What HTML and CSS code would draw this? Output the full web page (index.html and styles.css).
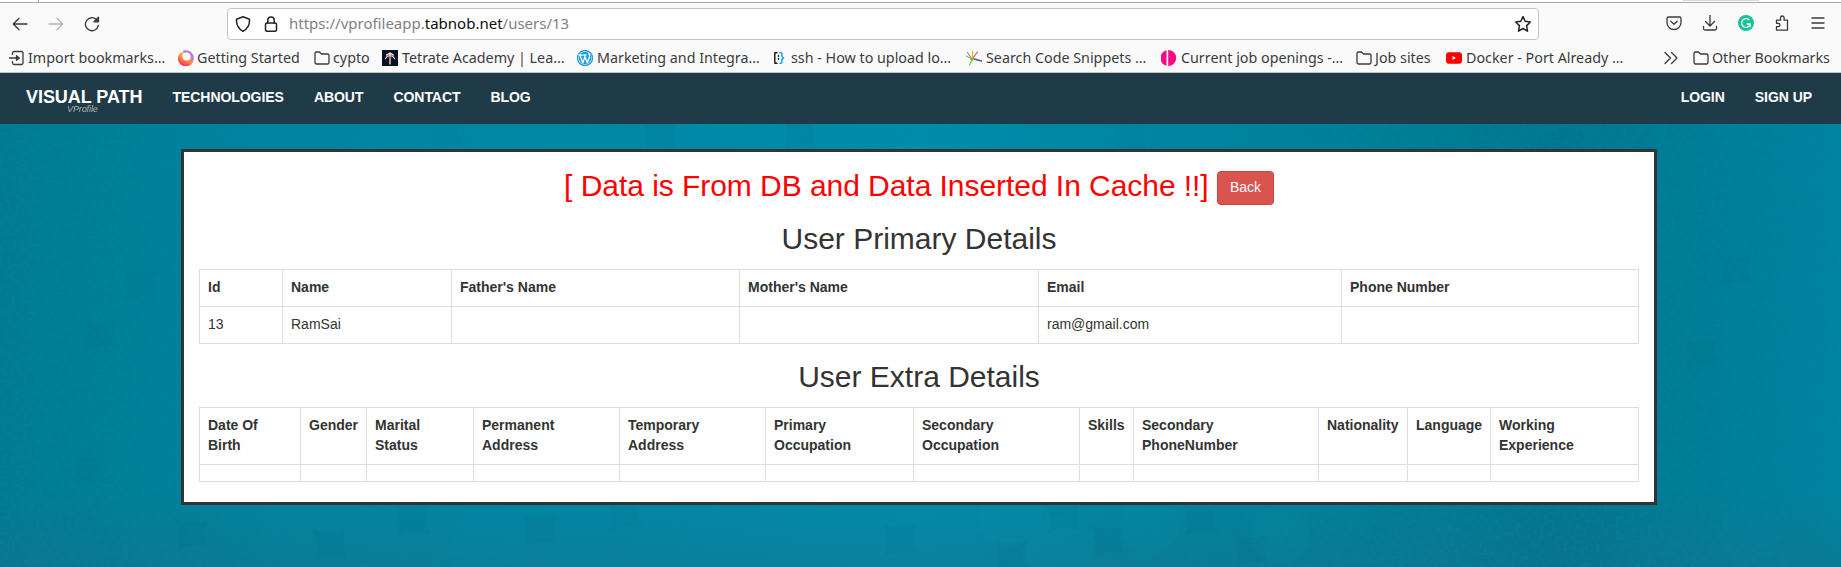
FILE: index.html
```html
<!DOCTYPE html>
<html lang="en">
<head>
<meta charset="utf-8">
<title>VProfile - User Details</title>
<link rel="stylesheet" href="styles.css">
</head>
<body>
<div class="tabstrip"><i class="tab-edge"></i><i class="tab-shadow"></i></div>
<header class="toolbar">
  <div class="nav-buttons">
    <svg class="icon" viewBox="0 0 16 16"><path d="M15 8H1.500M7 2.200 1.300 8 7 13.800"/></svg>
    <svg class="icon disabled" viewBox="0 0 16 16"><path d="M1 8h13.500M9 2.200 14.700 8 9 13.800"/></svg>
    <svg class="icon" viewBox="0 0 16 16"><path d="M14.300 9.500A6.500 6.500 0 1 1 12.600 3.700L14 5"/><path d="M14.500 1.200v4.600H9.900z" fill="#3a3a3f"/></svg>
  </div>
  <div class="urlbar">
    <svg class="icon" viewBox="0 0 16 16"><path d="M8 .8 14.500 3.200c.3 5-1.200 9.300-6.500 12.100C2.700 12.500 1.200 8.200 1.500 3.200z"/></svg>
    <svg class="icon lock" viewBox="0 0 16 16"><rect x="2.500" y="7" width="11" height="8.200" rx="1.500"/><path d="M4.800 7V4.200a3.200 3.200 0 0 1 6.400 0V7"/></svg>
    <span class="url">https://vprofileapp.<b>tabnob.net</b>/users/13</span>
    <svg class="icon star" viewBox="0 0 16 16"><path d="m8 .6 2.200 4.700 5.100.7-3.700 3.600.9 5.600L8 12.500l-4.500 2.700.9-5.600L.700 6l5.100-.7z"/></svg>
  </div>
  <div class="tools">
    <svg class="icon" viewBox="0 0 16 16"><path d="M1 3.500a1.500 1.500 0 0 1 1.500-1.500h11A1.500 1.500 0 0 1 15 3.500V7.500a7 7 0 0 1-14 0zM4.800 6.200 8 9.200l3.200-3"/></svg>
    <svg class="icon" viewBox="0 0 16 16"><path d="M8 0v10.500M3.500 6.500 8 11l4.500-4.500M1.500 11.500v2a1.500 1.500 0 0 0 1.500 1.500h10a1.500 1.500 0 0 0 1.500-1.500v-2"/></svg>
    <svg class="icon grammar" viewBox="0 0 16 16"><circle cx="8" cy="8" r="8"/><path d="M11 4.700A4.400 4.400 0 1 0 12.300 9H9.200M12.300 9v2.500"/></svg>
    <svg class="icon" viewBox="0 0 16 16"><path d="M2.500 6.500V5.200h4V2.800a1.800 1.800 0 0 1 3.600 0v2.400h3.400v10h-11v-3.500h1.800a1.700 1.700 0 0 0 0-3.400H2.500z"/></svg>
    <svg class="icon" viewBox="0 0 16 16"><path d="M2 3h12M2 8h12M2 13h12"/></svg>
  </div>
</header>
<nav class="bookmarks">
  <a class="bm bm-import"><svg class="icon" viewBox="0 0 16 16"><path d="M3.500 4.500V3A1.500 1.500 0 0 1 5 1.500h7.500A1.500 1.500 0 0 1 14 3v10a1.500 1.500 0 0 1-1.500 1.500H5A1.500 1.500 0 0 1 3.500 13v-1.500M0 8h8"/><path d="M7.500 5.700 10.300 8l-2.800 2.300z" fill="#3a3a3f"/></svg><span>Import bookmarks…</span></a>
  <a class="bm bm-start"><svg class="icon plain" viewBox="0 0 16 16"><defs><linearGradient id="ff" x1=".8" y1=".1" x2=".3" y2="1"><stop offset="0" stop-color="#ffd45e"/><stop offset=".5" stop-color="#ff8a45"/><stop offset="1" stop-color="#f5256c"/></linearGradient></defs><path d="M2 3a8 8 0 1 0 13.500 3C14 8 12 5 8 3 6 2 3 2 2 3z" fill="url(#ff)"/><path d="M4.500.8C10-1.500 16 2.500 15.600 8c-.1 2-1.300 3.300-3 3.500 2-4.500-.6-8-6.100-8z" fill="#b07af5"/><circle cx="8.500" cy="6.500" r="4" fill="#fff"/></svg><span>Getting Started</span></a>
  <a class="bm bm-cypto"><svg class="icon" viewBox="0 0 16 16"><path d="M1 3.500A1.500 1.500 0 0 1 2.500 2h3l2 2h6A1.500 1.500 0 0 1 15 5.500v7a1.500 1.500 0 0 1-1.500 1.500h-11A1.500 1.500 0 0 1 1 12.500z"/></svg><span>cypto</span></a>
  <a class="bm bm-tetrate"><svg class="icon plain" viewBox="0 0 16 16"><path d="M0 0h16v16H0z" fill="#0b0f22"/><path d="M8 3v11M8 3 4.500 5M8 3l3.500 2M3.500 8.500 5.500 6h5l2 2.500" fill="none" stroke="#fff" stroke-width="1.200"/><circle cx="8" cy="7.500" r="1.300" fill="#f05a28"/></svg><span>Tetrate Academy | Lea…</span></a>
  <a class="bm bm-marketing"><svg class="icon plain" viewBox="0 0 16 16"><circle cx="8" cy="8" r="7.500" fill="#fff" stroke="#1b9fd8"/><circle cx="8" cy="8" r="6.300" fill="#1b9fd8"/><path d="m2.800 5 3 8L8 6.500l2.300 6.500 2.300-6.500c.4-1.200 0-2-.8-2.800M2 5h3M6.500 5H9" fill="none" stroke="#fff" stroke-width="1.300"/></svg><span>Marketing and Integra…</span></a>
  <a class="bm bm-ssh"><svg class="icon plain" viewBox="0 0 16 16"><path d="M5 2.800H2.800v10.400H5" fill="none" stroke="#222" stroke-width="1.500"/><path d="M8 2.800h.8c1.200 0 1 1 1 2.500s.3 2.200 1.800 2.700c-1.500.5-1.800 1.200-1.800 2.700s.2 2.500-1 2.500H8" fill="none" stroke="#1ea7e8" stroke-width="1.600"/><path d="M6.500 5.500v1M6.500 8.500v1" stroke="#222"/></svg><span>ssh - How to upload lo…</span></a>
  <a class="bm bm-search"><svg class="icon plain" viewBox="0 0 16 16"><g fill="none" stroke-width="1.200"><path d="M6 9 1.500 2.500" stroke="#a77bc4"/><path d="M6.500 8V1" stroke="#f2b632"/><path d="m7 8 4.500-6" stroke="#ef5350"/><path d="m8 9 7.500 2" stroke="#5b4ea8" stroke-width="1.600"/><path d="M0 6 6.500 9 3.500 15" stroke="#7dcb50" stroke-width="1.300"/><path d="m4 7.500 4 1-2.500 4z" fill="#64c832"/></g></svg><span>Search Code Snippets …</span></a>
  <a class="bm bm-jobs"><svg class="icon plain" viewBox="0 0 16 16"><path d="M5.500.3v15.400A8 8 0 0 1 5.500.3zM7.200 0a8 8 0 0 1 0 16z" fill="#ff0a85"/></svg><span>Current job openings -…</span></a>
  <a class="bm bm-sites"><svg class="icon" viewBox="0 0 16 16"><path d="M1 3.500A1.500 1.500 0 0 1 2.500 2h3l2 2h6A1.500 1.500 0 0 1 15 5.500v7a1.500 1.500 0 0 1-1.500 1.500h-11A1.500 1.500 0 0 1 1 12.500z"/></svg><span>Job sites</span></a>
  <a class="bm bm-docker"><svg class="icon plain" viewBox="0 0 16 16"><rect y="2.300" width="16" height="11.400" rx="3" fill="#f00"/><path d="m6.500 6 3.500 2-3.500 2z" fill="#fff"/></svg><span>Docker - Port Already …</span></a>
  <svg class="icon more" viewBox="0 0 16 16"><path d="m2 2.500 5.500 5.500L2 13.500M8.500 2.500 14 8l-5.500 5.500"/></svg>
  <a class="bm bm-other"><svg class="icon" viewBox="0 0 16 16"><path d="M1 3.500A1.500 1.500 0 0 1 2.500 2h3l2 2h6A1.500 1.500 0 0 1 15 5.500v7a1.500 1.500 0 0 1-1.500 1.500h-11A1.500 1.500 0 0 1 1 12.500z"/></svg><span>Other Bookmarks</span></a>
</nav>
<nav class="navbar">
  <a class="brand">VISUAL PATH<small>VProfile</small></a>
  <a>TECHNOLOGIES</a><a>ABOUT</a><a>CONTACT</a><a>BLOG</a>
  <a class="push">LOGIN</a><a>SIGN UP</a>
</nav>
<main class="page">
  <svg class="texture" width="1841" height="443">
    <filter id="grain" x="0" y="0" width="100%" height="100%"><feTurbulence type="fractalNoise" baseFrequency=".25" numOctaves="3" seed="8"/><feColorMatrix values="0 0 0 0 0  0 0 0 0 .25  0 0 0 0 .33  0 0 0 1 -.44"/></filter>
    <defs><path id="spark" d="M-17-15Q0-8 17-14 9 0 18 15 2 8-15 17-9 2-17-15z"/></defs>
    <rect width="100%" height="100%" filter="url(#grain)"/>
    <g class="sparks">
      <use href="#spark" x="192" y="410"/><use href="#spark" x="412" y="395"/><use href="#spark" x="540" y="405"/><use href="#spark" x="625" y="390"/><use href="#spark" x="330" y="420"/>
      <use href="#spark" x="900" y="415"/><use href="#spark" x="1012" y="430"/><use href="#spark" x="1063" y="392"/><use href="#spark" x="1108" y="416"/><use href="#spark" x="1200" y="395"/><use href="#spark" x="1250" y="425"/>
      <use href="#spark" x="445" y="8"/><use href="#spark" x="660" y="12"/><use href="#spark" x="800" y="10"/><use href="#spark" x="1130" y="12"/>
      <use href="#spark" x="140" y="160"/><use href="#spark" x="100" y="210"/><use href="#spark" x="90" y="345"/><use href="#spark" x="1700" y="230"/><use href="#spark" x="1735" y="145"/>
    </g>
    <g class="rings"><circle cx="490" cy="425" r="42"/><circle cx="1010" cy="390" r="33"/><circle cx="1060" cy="430" r="38"/><circle cx="1150" cy="400" r="30"/><circle cx="1750" cy="410" r="32"/><circle cx="1280" cy="410" r="30"/></g>
  </svg>
  <section class="card">
    <h2 class="notice">[ Data is From DB and Data Inserted In Cache !!] <a class="btn">Back</a></h2>
    <h2>User Primary Details</h2>
    <table class="primary">
      <colgroup><col class="p1"><col class="p2"><col class="p3"><col class="p4"><col class="p5"><col></colgroup>
      <tr><th>Id</th><th>Name</th><th>Father's Name</th><th>Mother's Name</th><th>Email</th><th>Phone Number</th></tr>
      <tr><td>13</td><td>RamSai</td><td></td><td></td><td>ram@gmail.com</td><td></td></tr>
    </table>
    <h2>User Extra Details</h2>
    <table class="extra">
      <colgroup><col class="e1"><col class="e2"><col class="e3"><col class="e4"><col class="e5"><col class="e6"><col class="e7"><col class="e8"><col class="e9"><col class="e10"><col class="e11"><col></colgroup>
      <tr><th>Date Of<br>Birth</th><th>Gender</th><th>Marital<br>Status</th><th>Permanent<br>Address</th><th>Temporary<br>Address</th><th>Primary<br>Occupation</th><th>Secondary<br>Occupation</th><th>Skills</th><th>Secondary<br>PhoneNumber</th><th>Nationality</th><th>Language</th><th>Working<br>Experience</th></tr>
      <tr><td></td><td></td><td></td><td></td><td></td><td></td><td></td><td></td><td></td><td></td><td></td><td></td></tr>
    </table>
  </section>
</main>
</body>
</html>
```
FILE: styles.css
```css
* { box-sizing: border-box; }
body {
  margin: 0;
  height: 567px;
  overflow: hidden;
  display: flex;
  flex-direction: column;
  font: 14px/20px "Liberation Sans", Arial, sans-serif;
  color: #333;
}
.tabstrip { flex: none; height: 3px; display: flex; justify-content: space-between; background: #fff; border-bottom: 1px solid #aaa; padding: 0 82px 0 38px; }
.tab-edge { width: 1px; background: #aaa; }
.tab-shadow { width: 76px; height: 1px; background: #d8d8d8; }
.icon { flex: none; width: 16px; height: 16px; fill: none; stroke: #3a3a3f; stroke-width: 1.3; stroke-linejoin: round; stroke-linecap: round; }
.icon.disabled { stroke: #b5b5b7; }
.icon.plain { stroke: none; }

.toolbar { flex: none; height: 39px; display: flex; align-items: center; background: #fafafa; padding: 0 15px 0 12px; }
.nav-buttons { display: flex; gap: 20px; width: 215px; margin-top: 3px; }
.urlbar {
  width: 1312px; height: 32px; margin-top: 2px;
  display: flex; align-items: center;
  padding: 0 8px 0 7px;
  background: #fff; border: 1px solid #c4c4c6; border-radius: 4px;
  font: 15px/20px "Noto Sans", "Open Sans", sans-serif; color: #808084;
}
.urlbar .icon { stroke: #222; stroke-width: 1.5; }
.urlbar .lock { margin-left: 12px; }
.url { margin-left: 10px; margin-top: -1px; white-space: nowrap; }
.url b { font-weight: 400; color: #0c0c0d; }
.urlbar .star { margin-left: auto; margin-right: -1px; }
.tools { display: flex; gap: 20px; margin-left: auto; }
.grammar circle { fill: #15c39a; stroke: none; }
.grammar path { stroke: #fff; }

.bookmarks { flex: none; height: 31px; display: flex; align-items: center; background: #fafafa; border-bottom: 1px solid #c4c4c6; padding: 1px 9px 0; font: 14.3px/20px "Noto Sans", "Open Sans", sans-serif; color: #3a3a3f; }
.bm { flex: none; display: flex; align-items: center; gap: 3px; white-space: nowrap; }
.bm-import { width: 169px; }
.bm-start { width: 136px; }
.bm-cypto { width: 68px; }
.bm-tetrate { width: 195px; gap: 4px; }
.bm-marketing { width: 195px; gap: 4px; }
.bm-ssh { width: 194px; }
.bm-search { width: 195px; gap: 4px; }
.bm-jobs { width: 195px; gap: 4px; }
.bm-sites { width: 90px; }
.bm-docker { width: 217px; gap: 4px; }
.more { margin-right: 14px; }
.bm-other { letter-spacing: -.07px; }

.navbar { flex: none; height: 51px; display: flex; align-items: center; gap: 30px; padding: 0 29px 4px 26px; background: #1f3b47; color: #fff; font-weight: 700; letter-spacing: -.05px; }
.brand { position: relative; font-size: 18px; }
.brand small { position: absolute; top: 17px; left: 41px; font: italic 9px/10px "Liberation Sans", Arial, sans-serif; color: #a9b3b7; letter-spacing: -.1px; }
.push { margin-left: auto; }

.page {
  position: relative; flex: 1; display: flex; align-items: flex-start; padding: 25px 0 0 181px;
  background:
    linear-gradient(180deg, rgba(28, 110, 140, 0) 82%, rgba(28, 110, 140, .4)),
    linear-gradient(90deg, #007a93, #0084a0 15%, #008cab 50%, #00819c 70%, #007690 85%, #0083a0);
}
.texture { position: absolute; inset: 0; }
.sparks { fill: #005f78; opacity: .07; }
.rings { fill: #18a0bd; opacity: .06; }
.card { position: relative; width: 1476px; height: 356px; padding: 0 15px; background: #fff; border: 3px solid #333; }
h2 { margin: 16px 0 14px; text-align: center; font-size: 30px; font-weight: 400; line-height: 33px; }
.notice { margin: 17px 0; color: #f00; letter-spacing: -.05px; }
.btn { display: inline-block; height: 34px; padding: 5px 12px; border: 1px solid #d43f3a; border-radius: 4px; background: #d9534f; color: #fff; font-size: 14px; line-height: 20px; vertical-align: middle; }
table { width: 1440px; border-collapse: collapse; table-layout: fixed; }
th, td { border: 1px solid #ddd; padding: 7px 8px 9px; text-align: left; vertical-align: top; }
.p1 { width: 83px; } .p2 { width: 169px; } .p3 { width: 288px; } .p4 { width: 299px; } .p5 { width: 303px; }
.e1 { width: 101px; } .e2 { width: 66px; } .e3 { width: 107px; } .e4 { width: 146px; } .e5 { width: 146px; } .e6 { width: 148px; } .e7 { width: 166px; } .e8 { width: 54px; } .e9 { width: 185px; } .e10 { width: 89px; } .e11 { width: 83px; }
```
